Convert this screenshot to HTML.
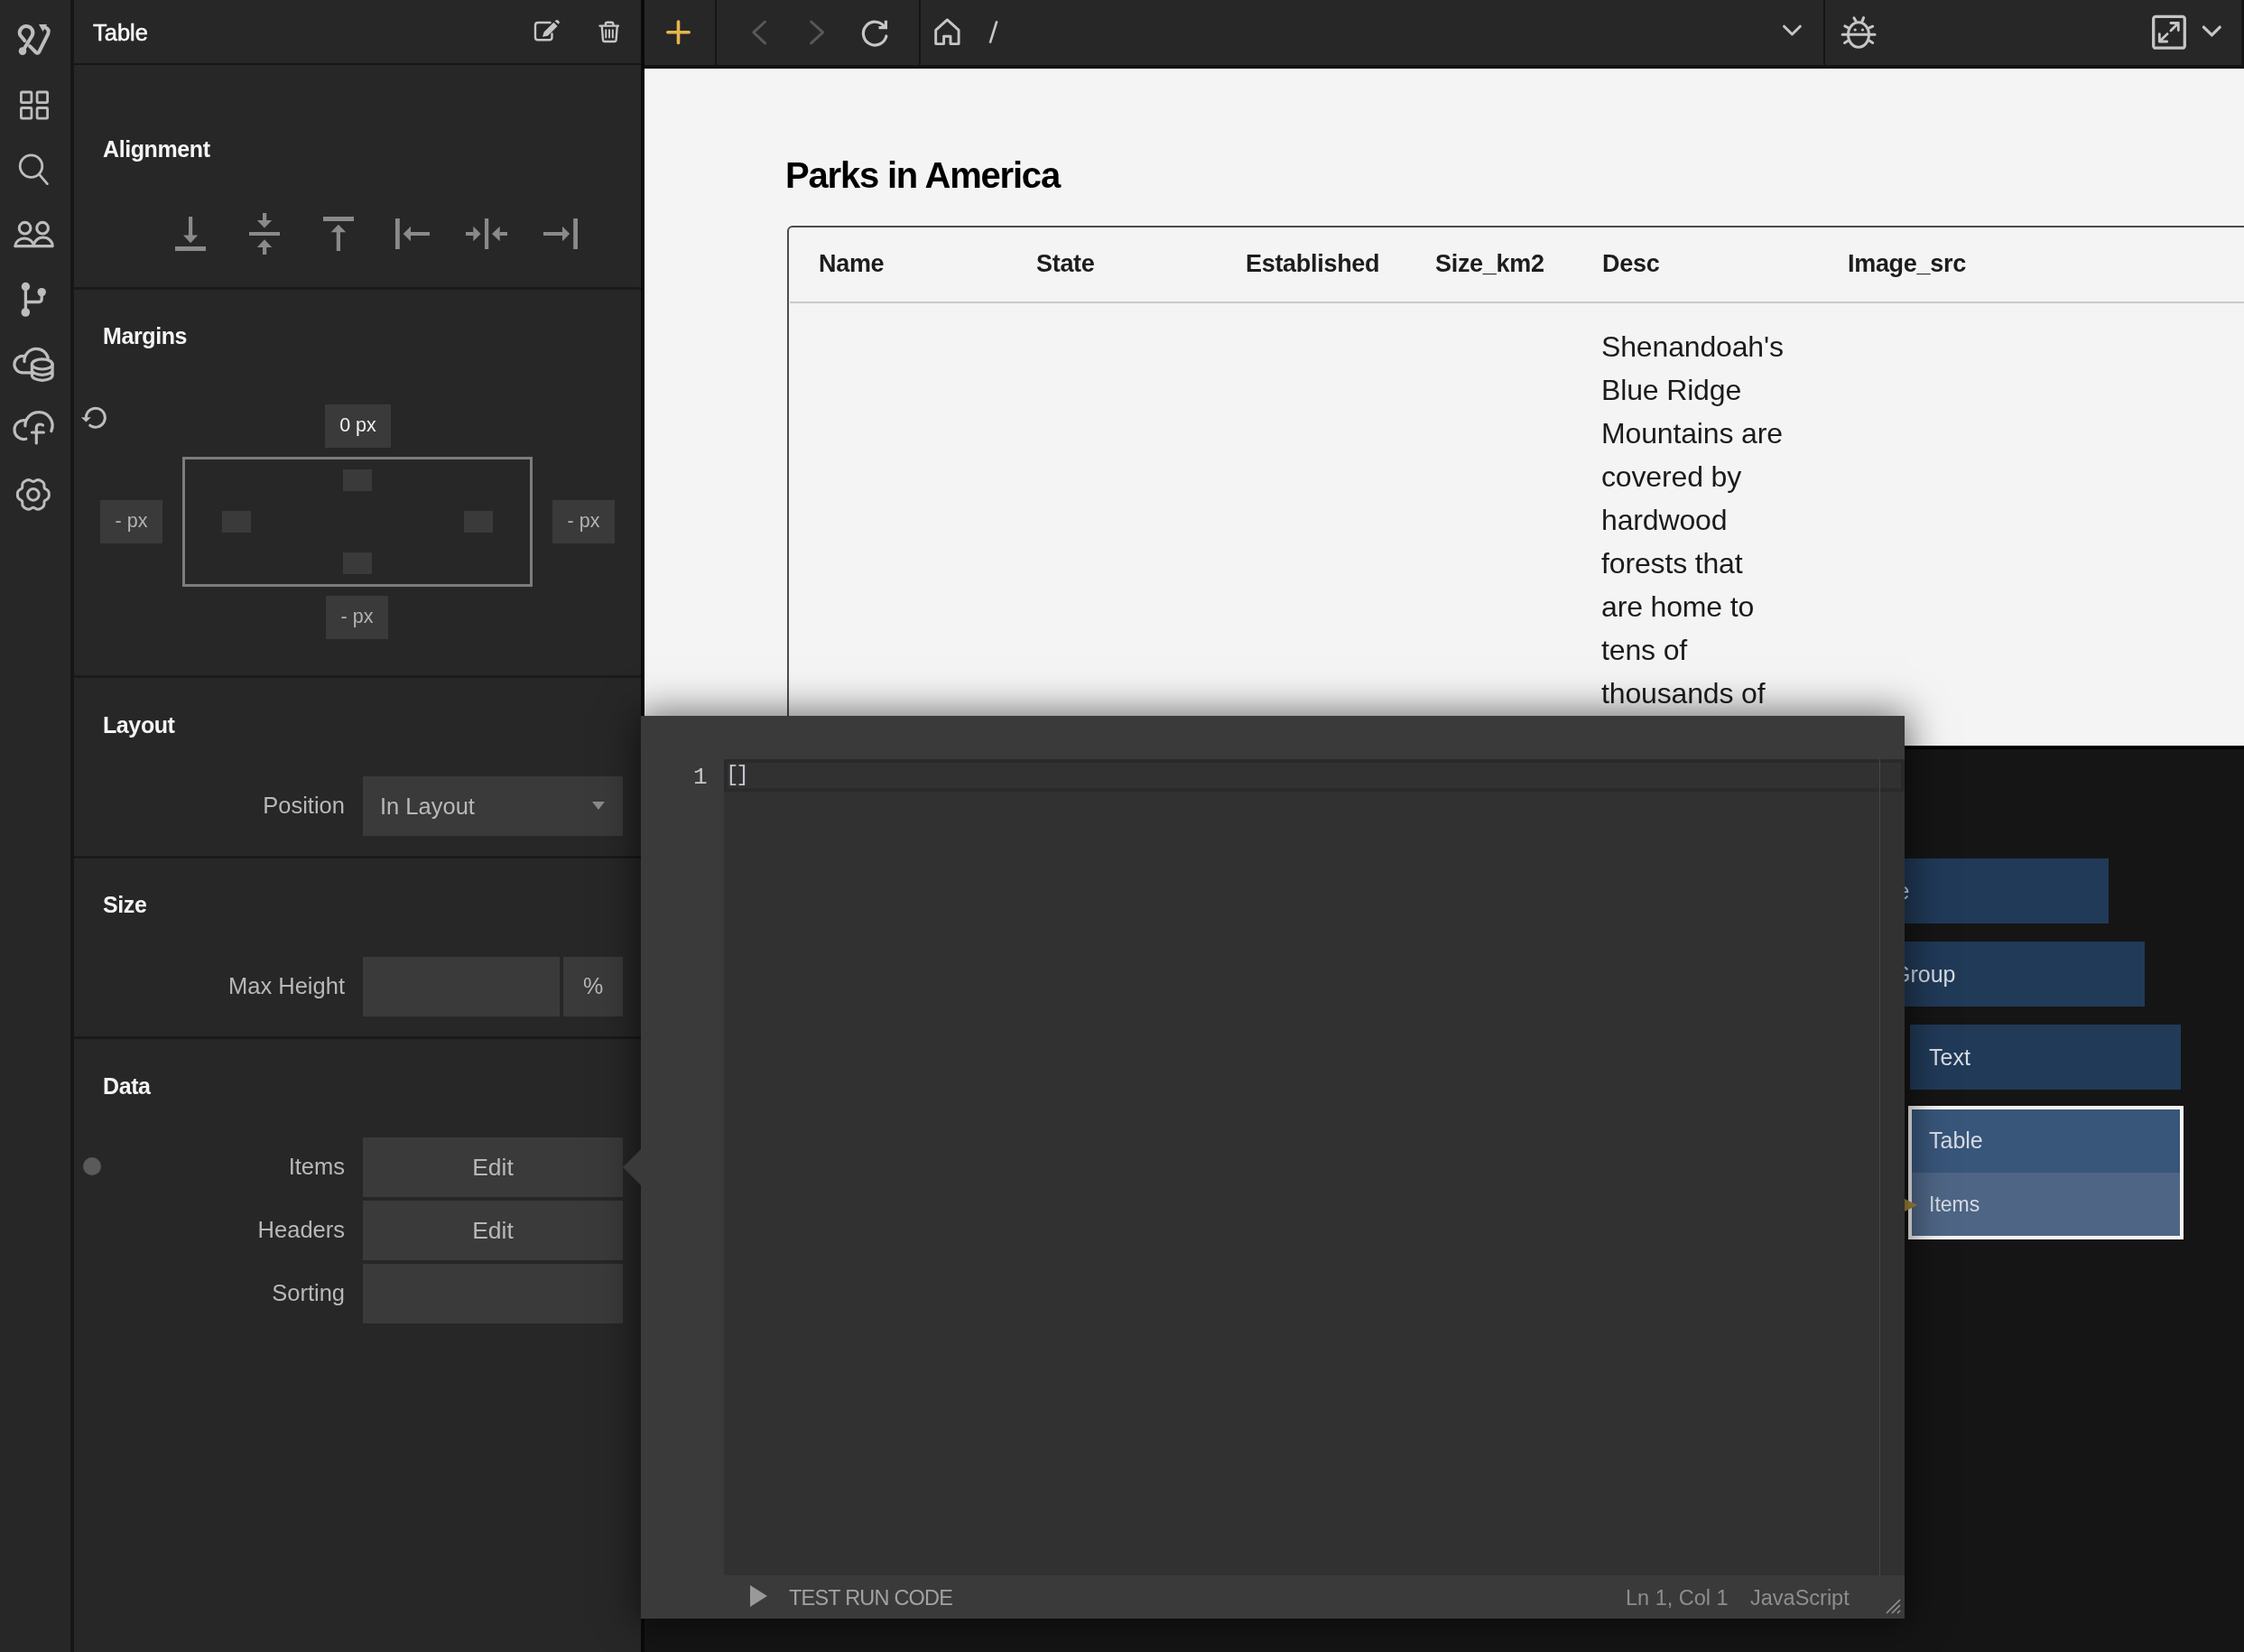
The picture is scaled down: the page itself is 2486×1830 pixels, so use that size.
<!DOCTYPE html>
<html><head><meta charset="utf-8">
<style>
*{margin:0;padding:0;box-sizing:border-box}
html,body{width:2486px;height:1830px;overflow:hidden;background:#151515;font-family:"Liberation Sans",sans-serif}
.a{position:absolute}
.t{position:absolute;white-space:nowrap;line-height:1}
body{-webkit-font-smoothing:antialiased}
.t,.tx{will-change:transform}
svg{position:absolute;overflow:visible}
</style></head><body>

<!-- left icon sidebar -->
<div class="a" style="left:0;top:0;width:78px;height:1830px;background:#272727"></div>
<div class="a" style="left:78px;top:0;width:4px;height:1830px;background:#161616"></div>

<!-- properties panel -->
<div class="a" style="left:82px;top:0;width:628px;height:1830px;background:#272727"></div>
<div class="a" style="left:82px;top:70px;width:628px;height:2px;background:#161616"></div>
<div class="a" style="left:82px;top:318px;width:628px;height:3px;background:#1a1a1a"></div>
<div class="a" style="left:82px;top:748px;width:628px;height:3px;background:#1a1a1a"></div>
<div class="a" style="left:82px;top:948px;width:628px;height:3px;background:#1a1a1a"></div>
<div class="a" style="left:82px;top:1148px;width:628px;height:3px;background:#1a1a1a"></div>
<div class="a" style="left:710px;top:0;width:4px;height:1830px;background:#0a0a0a"></div>

<div class="t" style="left:103px;top:23.6px;font-size:25.5px;color:#f8f8f8;-webkit-text-stroke:0.5px #f8f8f8">Table</div>

<div class="t" style="left:114px;top:152.6px;font-size:25px;font-weight:bold;color:#f4f4f4;letter-spacing:-0.4px">Alignment</div>
<div class="t" style="left:114px;top:360.2px;font-size:25px;font-weight:bold;color:#f4f4f4;letter-spacing:-0.4px">Margins</div>
<div class="t" style="left:114px;top:790.5px;font-size:25px;font-weight:bold;color:#f4f4f4;letter-spacing:-0.4px">Layout</div>
<div class="t" style="left:114px;top:990.2px;font-size:25px;font-weight:bold;color:#f4f4f4;letter-spacing:-0.4px">Size</div>
<div class="t" style="left:114px;top:1190.5px;font-size:25px;font-weight:bold;color:#f4f4f4;letter-spacing:-0.4px">Data</div>

<!-- margins widget -->
<div class="a" style="left:360px;top:448px;width:73px;height:48px;background:#3a3a3a"></div>
<div class="t" style="left:360px;width:73px;text-align:center;top:461px;font-size:21.5px;color:#f0f0f0">0 px</div>
<div class="a" style="left:111px;top:554px;width:69px;height:48px;background:#3a3a3a"></div>
<div class="t" style="left:111px;width:69px;text-align:center;top:567px;font-size:21.5px;color:#b4b4b4">- px</div>
<div class="a" style="left:612px;top:554px;width:69px;height:48px;background:#3a3a3a"></div>
<div class="t" style="left:612px;width:69px;text-align:center;top:567px;font-size:21.5px;color:#b4b4b4">- px</div>
<div class="a" style="left:361px;top:660px;width:69px;height:48px;background:#3a3a3a"></div>
<div class="t" style="left:361px;width:69px;text-align:center;top:673px;font-size:21.5px;color:#b4b4b4">- px</div>
<div class="a" style="left:202px;top:506px;width:388px;height:144px;border:3px solid #7c7c7c"></div>
<div class="a" style="left:380px;top:520px;width:32px;height:24px;background:#3a3a3a"></div>
<div class="a" style="left:246px;top:566px;width:32px;height:24px;background:#3a3a3a"></div>
<div class="a" style="left:514px;top:566px;width:32px;height:24px;background:#3a3a3a"></div>
<div class="a" style="left:380px;top:612px;width:32px;height:24px;background:#3a3a3a"></div>

<!-- layout / size / data -->
<div class="t" style="left:82px;width:300px;text-align:right;top:880px;font-size:25.5px;color:#b8b8b8">Position</div>
<div class="a" style="left:402px;top:860px;width:288px;height:66px;background:#3a3a3a"></div>
<div class="t" style="left:421px;top:881px;font-size:25.5px;color:#b8b8b8">In Layout</div>
<svg style="left:656px;top:888px" width="14" height="9"><path d="M0 0H14L7 9Z" fill="#8a8a8a"/></svg>

<div class="t" style="left:82px;width:300px;text-align:right;top:1080px;font-size:25.5px;color:#b8b8b8">Max Height</div>
<div class="a" style="left:402px;top:1060px;width:218px;height:66px;background:#3a3a3a"></div>
<div class="a" style="left:624px;top:1060px;width:66px;height:66px;background:#3a3a3a"></div>
<div class="t" style="left:624px;width:66px;text-align:center;top:1080px;font-size:25px;color:#b8b8b8">%</div>

<div class="a" style="left:92px;top:1282px;width:20px;height:20px;border-radius:50%;background:#5a5a5a"></div>
<div class="t" style="left:82px;width:300px;text-align:right;top:1280px;font-size:25.5px;color:#b8b8b8">Items</div>
<div class="a" style="left:402px;top:1260px;width:288px;height:66px;background:#3a3a3a"></div>
<div class="t" style="left:402px;width:288px;text-align:center;top:1280px;font-size:26.5px;color:#b8b8b8">Edit</div>
<div class="t" style="left:82px;width:300px;text-align:right;top:1349.5px;font-size:25.5px;color:#b8b8b8">Headers</div>
<div class="a" style="left:402px;top:1330px;width:288px;height:66px;background:#3a3a3a"></div>
<div class="t" style="left:402px;width:288px;text-align:center;top:1349.5px;font-size:26.5px;color:#b8b8b8">Edit</div>
<div class="t" style="left:82px;width:300px;text-align:right;top:1419.5px;font-size:25.5px;color:#b8b8b8">Sorting</div>
<div class="a" style="left:402px;top:1400px;width:288px;height:66px;background:#3a3a3a"></div>

<!-- toolbar -->
<div class="a" style="left:714px;top:0;width:1769px;height:72px;background:#272727"></div>
<div class="a" style="left:714px;top:72px;width:1772px;height:4px;background:#121212"></div>
<div class="a" style="left:2483px;top:0;width:3px;height:72px;background:#141414"></div>
<div class="a" style="left:792px;top:0;width:2px;height:72px;background:#161616"></div>
<div class="a" style="left:1018px;top:0;width:2px;height:72px;background:#161616"></div>
<div class="a" style="left:2020px;top:0;width:2px;height:72px;background:#161616"></div>

<!-- canvas -->
<div class="a" style="left:714px;top:76px;width:1772px;height:750px;background:#f4f4f4;overflow:hidden">
  <div class="t" style="left:156.2px;top:97.5px;font-size:40px;font-weight:bold;color:#000;letter-spacing:-1.2px">Parks in America</div>
  <div class="a" style="left:158px;top:174px;width:1700px;height:700px;border:2px solid #4c4c4c;border-radius:6px"></div>
  <div class="a" style="left:161px;top:258px;width:1700px;height:2px;background:#c9c9c9"></div>
  <div class="t" style="left:192.8px;top:202.9px;font-size:27px;font-weight:bold;color:#1d1d1d;letter-spacing:-0.3px">Name</div>
  <div class="t" style="left:434px;top:202.9px;font-size:27px;font-weight:bold;color:#1d1d1d;letter-spacing:-0.3px">State</div>
  <div class="t" style="left:666px;top:202.9px;font-size:27px;font-weight:bold;color:#1d1d1d;letter-spacing:-0.3px">Established</div>
  <div class="t" style="left:875.8px;top:202.9px;font-size:27px;font-weight:bold;color:#1d1d1d;letter-spacing:-0.3px">Size_km2</div>
  <div class="t" style="left:1060.5px;top:202.9px;font-size:27px;font-weight:bold;color:#1d1d1d;letter-spacing:-0.3px">Desc</div>
  <div class="t" style="left:1333.4px;top:202.9px;font-size:27px;font-weight:bold;color:#1d1d1d;letter-spacing:-0.3px">Image_src</div>
  <div class="a tx" style="left:1059.9px;top:283.9px;font-size:32px;line-height:48px;color:#1b1b1b;letter-spacing:-0.15px;white-space:nowrap">Shenandoah's<br>Blue Ridge<br>Mountains are<br>covered by<br>hardwood<br>forests that<br>are home to<br>tens of<br>thousands of<br>species</div>
</div>
<div class="a" style="left:714px;top:826px;width:1772px;height:4px;background:#000"></div>

<svg style="left:0;top:0" width="2486" height="800" viewBox="0 0 2486 800">
<g fill="none" stroke="#bdbdbd" stroke-linecap="round" stroke-linejoin="round">
 <!-- logo -->
 <path d="M27.3 45 L22.2 38.8 A7.3 7.3 0 1 1 35.6 39.5 L25.5 56" stroke-width="4"/>
 <path d="M33 51.2 L39.8 58 Q41.6 59.8 43.2 57.6 L53.2 37.6 Q55 32.6 50.6 30.6" stroke-width="4"/>
 <!-- grid -->
 <rect x="23.4" y="102" width="11.5" height="11.7" rx="1" stroke-width="2.8"/>
 <rect x="41.1" y="102" width="11.5" height="11.7" rx="1" stroke-width="2.8"/>
 <rect x="23.4" y="119.5" width="11.5" height="11.7" rx="1" stroke-width="2.8"/>
 <rect x="41.1" y="119.5" width="11.5" height="11.7" rx="1" stroke-width="2.8"/>
 <!-- search -->
 <circle cx="34.5" cy="184.1" r="12.3" stroke-width="2.8"/>
 <path d="M43.6 193.4 L52.4 203.6" stroke-width="2.8"/>
 <!-- users -->
 <circle cx="27.6" cy="252.7" r="6.3" stroke-width="3.1"/>
 <circle cx="47.1" cy="252.7" r="6.3" stroke-width="3.1"/>
 <path d="M16.7 272.6 A10.4 9.6 0 0 1 37.4 272.6 M37.4 272.6 A10.4 9.6 0 0 1 58.2 272.6 M16.7 272.6 H58.2" stroke-width="3.1"/>
 <!-- branch -->
 <path d="M28.4 317.5 V346 M28.4 334.5 H43 Q46.2 334.5 46.2 331 V323.6" stroke-width="3.3"/>
 <!-- cloud db -->
 <path d="M34.2 412.8 H25.1 A9.2 9.2 0 0 1 15.9 403.6 A9.2 9.2 0 0 1 27.0 394.6 M27.0 400.66 A13.3 13.3 0 0 1 40.25 386.4 A13.3 13.3 0 0 1 53.26 396.73" stroke-width="3.2"/>
 <ellipse cx="46.75" cy="403.4" rx="11.35" ry="5.6" stroke-width="3.2"/>
 <path d="M35.4 403.4 V415.7 A11.35 5.6 0 0 0 58.1 415.7 V403.4 M35.4 409.7 A11.35 5.6 0 0 0 58.1 409.7" stroke-width="3.2"/>
 <!-- cloud f -->
 <path d="M28.8 486.2 A10.25 10.25 0 0 1 16.05 476 A10.25 10.25 0 0 1 27.9 465.7 M27.9 471.8 A14.9 14.9 0 0 1 42.7 456.6 A14.9 14.9 0 0 1 56.8 477.5" stroke-width="3.2"/>
 <path d="M40.3 490.9 V474 Q40.3 470 44.3 470 Q46 470 47.5 471 M35.4 479 H48.4" stroke-width="3.2"/>
 <!-- gear -->
 <path d="M54.30 547.85 L54.28 548.76 L54.19 549.67 L53.99 550.56 L53.63 551.42 L53.05 552.19 L52.29 552.87 L51.40 553.43 L50.52 553.94 L49.78 554.44 L49.28 555.02 L49.02 555.76 L48.96 556.65 L48.96 557.66 L48.91 558.71 L48.71 559.71 L48.33 560.60 L47.77 561.34 L47.10 561.95 L46.35 562.48 L45.58 562.96 L44.77 563.40 L43.94 563.78 L43.07 564.05 L42.15 564.16 L41.19 564.05 L40.22 563.73 L39.29 563.24 L38.41 562.73 L37.61 562.34 L36.85 562.20 L36.09 562.34 L35.29 562.73 L34.41 563.24 L33.48 563.73 L32.51 564.05 L31.55 564.16 L30.63 564.05 L29.76 563.78 L28.93 563.40 L28.13 562.96 L27.35 562.48 L26.60 561.95 L25.93 561.34 L25.37 560.60 L24.99 559.71 L24.79 558.71 L24.74 557.66 L24.74 556.65 L24.68 555.76 L24.42 555.02 L23.92 554.44 L23.18 553.94 L22.30 553.43 L21.41 552.87 L20.65 552.19 L20.07 551.42 L19.71 550.56 L19.51 549.67 L19.42 548.76 L19.40 547.85 L19.42 546.94 L19.51 546.03 L19.71 545.14 L20.07 544.28 L20.65 543.51 L21.41 542.83 L22.30 542.27 L23.18 541.76 L23.92 541.26 L24.42 540.68 L24.68 539.94 L24.74 539.05 L24.74 538.04 L24.79 536.99 L24.99 535.99 L25.37 535.10 L25.93 534.36 L26.60 533.75 L27.35 533.22 L28.12 532.74 L28.93 532.30 L29.76 531.92 L30.63 531.65 L31.55 531.54 L32.51 531.65 L33.48 531.97 L34.41 532.46 L35.29 532.97 L36.09 533.36 L36.85 533.50 L37.61 533.36 L38.41 532.97 L39.29 532.46 L40.22 531.97 L41.19 531.65 L42.15 531.54 L43.07 531.65 L43.94 531.92 L44.77 532.30 L45.58 532.74 L46.35 533.22 L47.10 533.75 L47.77 534.36 L48.33 535.10 L48.71 535.99 L48.91 536.99 L48.96 538.04 L48.96 539.05 L49.02 539.94 L49.28 540.68 L49.78 541.26 L50.52 541.76 L51.40 542.27 L52.29 542.83 L53.05 543.51 L53.63 544.28 L53.99 545.14 L54.19 546.03 L54.28 546.94Z" stroke-width="3"/>
 <circle cx="36.85" cy="547.85" r="6.3" stroke-width="3"/>
 <!-- margins refresh -->
 <path d="M99.7 471.2 A10.5 10.5 0 1 0 95.4 461.5" stroke-width="3"/>
</g>
<path d="M43 27 L52 27 L47.5 35 Z" fill="#bdbdbd"/>
<circle cx="25" cy="56.6" r="4.3" fill="#bdbdbd"/>
<circle cx="28.4" cy="317.5" r="4.7" fill="#bdbdbd"/>
<circle cx="46.2" cy="323.6" r="4.7" fill="#bdbdbd"/>
<circle cx="28.3" cy="346" r="4.8" fill="#bdbdbd"/>
<path d="M89.9 462.3 L100.8 462.3 L95.3 467.6 Z" fill="#bdbdbd"/>

<!-- header edit / trash -->
<g fill="none" stroke="#c6c6c6" stroke-width="2.4" stroke-linecap="round" stroke-linejoin="round">
 <path d="M609.5 25 H596.2 Q593 25 593 28.2 V41.2 Q593 44.3 596.2 44.3 H608.3 Q611.5 44.3 611.5 41.2 V37.5"/>
 <path d="M664.5 28.6 H685 M670.8 28.2 V27 Q670.8 24.8 673 24.8 H677.2 Q679.4 24.8 679.4 27 V28.2 M666.8 29.5 L668 44.2 Q668.2 46 670 46 H680.6 Q682.4 46 682.6 44.2 L683.7 29.5"/>
 <path d="M671.3 33.2 V41.6 M675 33.2 V41.6 M678.8 33.2 V41.6" stroke-width="2"/>
</g>
<path d="M601 40.8 L602.6 35.6 L613.4 24.8 L617.6 29 L606.8 39.8 Z M614.6 23.6 L615.8 22.4 Q617 21.4 618.2 22.4 L619.4 23.6 Q620.4 24.8 619.4 26 L618.8 26.8 Z" fill="#c6c6c6"/>

<!-- alignment icons -->
<g fill="#8a8a8a">
 <rect x="194" y="273" width="34" height="5"/><rect x="209" y="240" width="4.2" height="21"/><path d="M203 260.6 H219.2 L211.1 269.3Z"/>
 <rect x="276" y="257" width="34" height="4"/><rect x="291" y="236" width="4.2" height="8.5"/><path d="M284.8 244 H301.2 L293 252.6Z"/><path d="M284.8 274 H301.2 L293 265.2Z"/><rect x="291" y="274" width="4.2" height="8"/>
 <rect x="358" y="240" width="34" height="5"/><path d="M366.6 257.2 H383.2 L374.9 248.7Z"/><rect x="372.8" y="257" width="4.2" height="21"/>
 <rect x="438" y="242" width="4.8" height="34"/><path d="M446.7 259 L455 250.8 V267.2Z"/><rect x="455" y="257" width="21" height="4"/>
 <rect x="537" y="242" width="4.2" height="34"/><rect x="516" y="257" width="8.5" height="4"/><path d="M524.3 250.8 L532.6 259 L524.3 267.2Z"/><path d="M545 259 L553.7 250.8 V267.2Z"/><rect x="553.7" y="257" width="8.3" height="4"/>
 <rect x="635.2" y="242" width="4.8" height="34"/><rect x="602" y="257" width="21" height="4"/><path d="M623 250.8 L631.2 259 L623 267.2Z"/>
</g>

<!-- toolbar icons -->
<path d="M751.5 24 V47.5 M739.8 35.7 H763.2" stroke="#e6b64c" stroke-width="3.6" stroke-linecap="round"/>
<path d="M847.6 24 L834.8 35.8 L847.6 47.8" fill="none" stroke="#585858" stroke-width="3" stroke-linecap="round" stroke-linejoin="round"/>
<path d="M898.6 24 L911.6 35.8 L898.6 47.8" fill="none" stroke="#585858" stroke-width="3" stroke-linecap="round" stroke-linejoin="round"/>
<g fill="none" stroke="#c6c6c6" stroke-width="3.2" stroke-linejoin="round">
 <path d="M979.8 29.6 A12.9 12.9 0 1 0 981.9 40" stroke-linecap="round"/>
 <path d="M973.5 30.7 H981.4 V22.8" stroke-linejoin="miter"/>
 <path d="M1036.7 33.4 L1049.4 21.9 L1062.1 33.4 V48.6 H1053 V40.3 H1045.6 V48.6 H1036.7 Z" stroke-width="2.9"/>
 <path d="M1104.4 23.4 L1096.8 47.6" stroke-width="2.6"/>
 <path d="M1976.5 29.2 L1985.4 38 L1994.3 29.2" stroke-width="3" stroke-linecap="round"/>
 <!-- bug -->
 <ellipse cx="2059" cy="38.5" rx="11.5" ry="13.7" stroke-width="3"/>
 <path d="M2041.2 38.3 H2077" stroke-width="3" stroke-linecap="round"/>
 <path d="M2053.9 19.8 L2056.1 23.6 M2064.6 19.6 L2063 23.6 M2043.8 28.9 L2047.6 30.8 M2043.5 47.5 L2047.6 45 M2074.7 29.2 L2070.9 30.8 M2074.7 47.5 L2070.9 45" stroke-width="3" stroke-linecap="round"/>
 <!-- expand -->
 <rect x="2385.7" y="18.4" width="34.6" height="34.8" rx="2.5" stroke-width="3.3"/>
 <path d="M2404.9 25.5 H2413.3 V33.5 M2413.3 25.5 L2404.9 33.9 M2392.3 37.6 V46 H2400.7 M2392.3 46 L2401.1 37.6" stroke-width="2.8" stroke-linecap="round"/>
 <path d="M2441.4 30.1 L2450.4 38.9 L2459.2 30.1" stroke-width="3.3" stroke-linecap="round"/>
</g>
<circle cx="2055.2" cy="33" r="1.6" fill="#c6c6c6"/><circle cx="2063.5" cy="33" r="1.6" fill="#c6c6c6"/>
</svg>

<!-- tree -->
<div class="a" style="left:2036px;top:951px;width:300px;height:72px;background:#213a58"></div>
<div class="t" style="left:2057px;top:974.8px;font-size:25px;color:#d6dbe3">Page</div>
<div class="a" style="left:2076px;top:1043px;width:300px;height:72px;background:#213a58"></div>
<div class="t" style="left:2097px;top:1066.8px;font-size:25px;color:#d6dbe3">Group</div>
<div class="a" style="left:2116px;top:1135px;width:300px;height:72px;background:#213a58"></div>
<div class="t" style="left:2137px;top:1158.8px;font-size:25px;color:#d6dbe3">Text</div>
<div class="a" style="left:2114px;top:1225px;width:305px;height:148px;border:4px solid #f4f4f4;background:#38557a"></div>
<div class="a" style="left:2118px;top:1299px;width:297px;height:70px;background:#4e6585"></div>
<div class="t" style="left:2137px;top:1251.4px;font-size:25px;color:#d6dbe3">Table</div>
<div class="t" style="left:2137px;top:1322.9px;font-size:23px;color:#d6dbe3">Items</div>
<svg style="left:2110px;top:1328px" width="14" height="14"><path d="M0 0L14 7L0 14Z" fill="#a8893a"/></svg>

<!-- editor overlay -->
<div class="a" style="left:710px;top:793px;width:1400px;height:1000px;background:#3a3a3a;box-shadow:0 0 40px 4px rgba(0,0,0,0.55)"></div>
<svg style="left:690px;top:1273px" width="20" height="40"><path d="M20 0L0 20L20 40Z" fill="#3a3a3a"/></svg>
<div class="a" style="left:802px;top:841px;width:1308px;height:904px;background:#313131"></div>
<div class="a" style="left:802px;top:841px;width:1308px;height:36px;border:4px solid #2a2a2a;background:#313131"></div>
<div class="a" style="left:2082px;top:841px;width:1px;height:904px;background:#474747"></div>
<div class="t" style="left:768px;top:847.5px;font-family:'Liberation Mono',monospace;font-size:26px;color:#c8c8c8">1</div>
<div class="t" style="left:803.5px;top:847px;font-family:'Liberation Mono',monospace;font-size:24px;letter-spacing:-3px;color:#c4c4d2">[]</div>
<svg style="left:831px;top:1756px" width="19" height="24"><path d="M0 0L19 12L0 24Z" fill="#999"/></svg>
<div class="t" style="left:873.8px;top:1759.4px;font-size:23.5px;color:#a2a2a2;letter-spacing:-0.8px">TEST RUN CODE</div>
<div class="t" style="left:1801px;top:1759.4px;font-size:23.5px;color:#8e8e8e;letter-spacing:0px">Ln 1, Col 1</div>
<div class="t" style="left:1939px;top:1759.4px;font-size:23.5px;color:#8e8e8e;letter-spacing:0px">JavaScript</div>
<svg style="left:2090px;top:1772px" width="16" height="15"><path d="M0 15L15 0M6 15L15 6M12 15L15 12" stroke="#999" stroke-width="1.5"/></svg>

</body></html>
